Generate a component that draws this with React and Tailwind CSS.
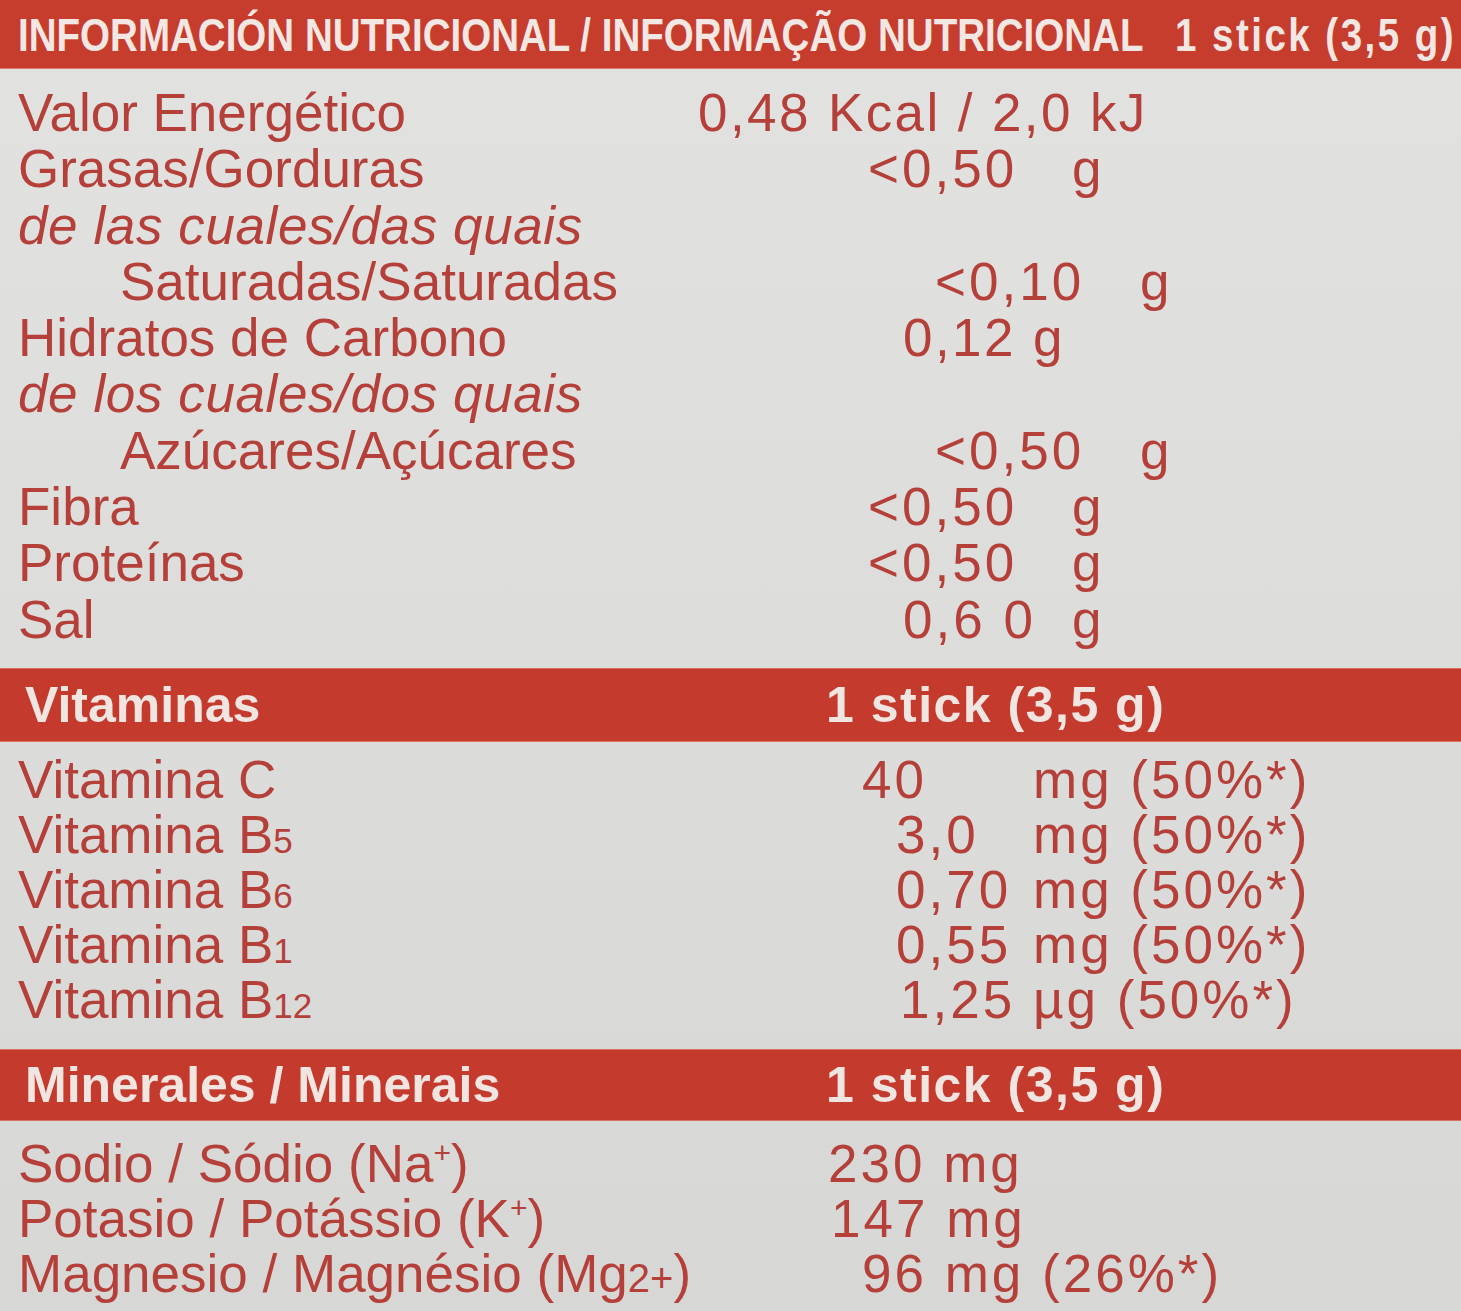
const sans = "font-['Liberation_Sans',Arial,sans-serif]";

const basics = [
  { label: 'Valor Energético', lw: 'w-[680px]', v: '0,48 Kcal / 2,0 kJ' },
  { label: 'Grasas/Gorduras', lw: 'w-[850px]', v: '<0,50', vw: 'w-[204px]', u: 'g' },
  { label: 'de las cuales/das quais', italic: true },
  { label: 'Saturadas/Saturadas', indent: true, lw: 'w-[917px]', v: '<0,10', vw: 'w-[205px]', u: 'g' },
  { label: 'Hidratos de Carbono', lw: 'w-[885px]', v: '0,12 g' },
  { label: 'de los cuales/dos quais', italic: true },
  { label: 'Azúcares/Açúcares', indent: true, lw: 'w-[917px]', v: '<0,50', vw: 'w-[205px]', u: 'g' },
  { label: 'Fibra', lw: 'w-[850px]', v: '<0,50', vw: 'w-[204px]', u: 'g' },
  { label: 'Proteínas', lw: 'w-[850px]', v: '<0,50', vw: 'w-[204px]', u: 'g' },
  { label: 'Sal', lw: 'w-[885px]', v: '0,6 0', vw: 'w-[169px]', u: 'g' },
];

const vitamins = [
  { name: 'C', lw: 'w-[844px]', v: '40', vw: 'w-[171px]', u: 'mg (50%*)' },
  { name: 'B', sub: '5', lw: 'w-[878px]', v: '3,0', vw: 'w-[137px]', u: 'mg (50%*)' },
  { name: 'B', sub: '6', lw: 'w-[878px]', v: '0,70', vw: 'w-[137px]', u: 'mg (50%*)' },
  { name: 'B', sub: '1', lw: 'w-[878px]', v: '0,55', vw: 'w-[137px]', u: 'mg (50%*)' },
  { name: 'B', sub: '12', lw: 'w-[882px]', v: '1,25', vw: 'w-[133px]', u: 'µg (50%*)' },
];

function Band({ left, right, h }) {
  return (
    <div className={`flex items-center ${h} bg-[#c43a2d] border-y border-[#d9705f] text-[#f1e5e1] font-bold text-[50px] leading-none whitespace-nowrap`}>
      <div className="w-[826px] shrink-0 pl-[25px]">{left}</div>
      <div className="tracking-[1.5px]">{right}</div>
    </div>
  );
}

function Row({ r }) {
  return (
    <div className="flex h-[56.3px] whitespace-nowrap">
      <div className={`${r.lw || ''} shrink-0 ${r.indent ? 'pl-[102px]' : ''} ${r.italic ? 'italic tracking-[0.6px]' : ''}`}>{r.label}</div>
      {r.v && (
        <div className={r.u ? 'tracking-[3px]' : 'tracking-[2.4px]'}>
          <span className={`inline-block ${r.vw || ''}`}>{r.v}</span>
          {r.u && <span>{r.u}</span>}
        </div>
      )}
    </div>
  );
}

function Sup({ children }) {
  return <span className="text-[30px] leading-none align-super">{children}</span>;
}

export default function App() {
  return (
    <div className={`${sans} w-full h-[1311px] overflow-hidden bg-gradient-to-b from-[#e2e3e1] to-[#d7d8d5] text-[#b5403a]`}>
      <div className="flex items-center h-[69px] bg-[#c63c2d] border-b border-[#dd7a68] text-[#f3e7e3] font-bold text-[47px] leading-none whitespace-nowrap">
        <div className="w-[1175px] shrink-0 pl-[18px]">
          <span className="inline-block origin-left scale-x-[0.82]">INFORMACIÓN NUTRICIONAL / INFORMAÇÃO NUTRICIONAL</span>
        </div>
        <span className="inline-block origin-left scale-x-[0.82] tracking-[3px]">1 stick (3,5 g)</span>
      </div>

      <div className="pl-[18px] pt-[16px] pb-[20px] text-[53px] leading-[56.3px]">
        {basics.map((r, i) => <Row key={i} r={r} />)}
      </div>

      <Band h="h-[74px]" left="Vitaminas" right="1 stick (3,5 g)" />

      <div className="pl-[18px] pt-[10px] pb-[22px] text-[53px] leading-[55px]">
        {vitamins.map((r, i) => (
          <div key={i} className="flex h-[55px] whitespace-nowrap">
            <div className={`${r.lw} shrink-0`}>
              Vitamina {r.name}
              {r.sub && <span className="text-[35px] leading-none">{r.sub}</span>}
            </div>
            <div className="tracking-[3px]">
              <span className={`inline-block ${r.vw}`}>{r.v}</span>
              <span>{r.u}</span>
            </div>
          </div>
        ))}
      </div>

      <Band h="h-[72px]" left="Minerales / Minerais" right="1 stick (3,5 g)" />

      <div className="pl-[18px] pt-[15px] text-[53px] leading-[55px]">
        <div className="flex h-[55px] whitespace-nowrap">
          <div className="w-[810px] shrink-0">Sodio / Sódio (Na<Sup>+</Sup>)</div>
          <div className="tracking-[3px]">230 mg</div>
        </div>
        <div className="flex h-[55px] whitespace-nowrap">
          <div className="w-[813px] shrink-0">Potasio / Potássio (K<Sup>+</Sup>)</div>
          <div className="tracking-[3px]">147 mg</div>
        </div>
        <div className="flex h-[55px] whitespace-nowrap">
          <div className="w-[844px] shrink-0">Magnesio / Magnésio (Mg<span className="text-[40px] leading-none">2+</span>)</div>
          <div className="tracking-[3px]">96 mg (26%*)</div>
        </div>
      </div>
    </div>
  );
}
